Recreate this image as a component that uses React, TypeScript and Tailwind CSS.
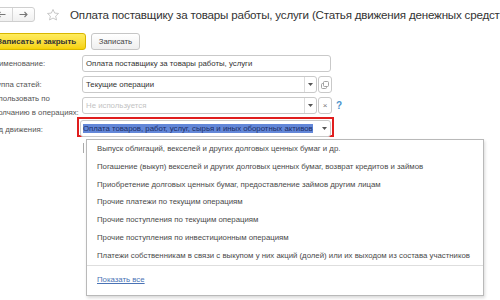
import React from "react";

const items = [
  "Выпуск облигаций, векселей и других долговых ценных бумаг и др.",
  "Погашение (выкуп) векселей и других долговых ценных бумаг, возврат кредитов и займов",
  "Приобретение долговых ценных бумаг, предоставление займов другим лицам",
  "Прочие платежи по текущим операциям",
  "Прочие поступления по текущим операциям",
  "Прочие поступления по инвестиционным операциям",
  "Платежи собственникам в связи с выкупом у них акций (долей) или их выходом из состава участников",
];

function Arrow() {
  return (
    <svg width="5" height="3" viewBox="0 0 5 3" className="text-[#555]">
      <path d="M0 0h5L2.5 3z" fill="currentColor" />
    </svg>
  );
}

function Field({ children, className = "" }: { children?: React.ReactNode; className?: string }) {
  return (
    <div className={"h-[17px] flex items-center rounded-[3px] border border-[#c9c9c9] bg-white " + className}>
      {children}
    </div>
  );
}

function Label({ children }: { children: React.ReactNode }) {
  return <div className="w-[93px] shrink-0 text-[7.8px] leading-[14px] text-[#555]">{children}</div>;
}

export default function App() {
  return (
    <div className="w-[500px] h-[300px] overflow-hidden bg-white font-['Liberation_Sans',Arial,sans-serif]">
      <div className="-ml-[11px] w-[520px]">
        {/* header */}
        <div className="flex items-center h-[29px]">
          <div className="ml-[1px] flex h-[15px] rounded-[3px] border border-[#cfcfcf] bg-gradient-to-b from-white to-[#f0f0f0]">
            <div className="w-[22px] flex items-center justify-center border-r border-[#d6d6d6]">
              <svg width="9" height="7" viewBox="0 0 9 7">
                <path d="M8.5 3.5H1M3.5 1L1 3.5 3.5 6" stroke="#777" strokeWidth="1.1" fill="none" />
              </svg>
            </div>
            <div className="w-[21px] flex items-center justify-center">
              <svg width="9" height="7" viewBox="0 0 9 7">
                <path d="M0.5 3.5H8M5.5 1L8 3.5 5.5 6" stroke="#777" strokeWidth="1.1" fill="none" />
              </svg>
            </div>
          </div>
          <svg width="14" height="14" viewBox="0 0 24 24" className="ml-[11px] shrink-0">
            <path
              d="M12 2.5l2.9 6.2 6.6.7-4.9 4.5 1.4 6.6L12 17.2l-5.9 3.3 1.4-6.6-4.9-4.5 6.6-.7z"
              fill="none"
              stroke="#bcbcbc"
              strokeWidth="1.4"
              strokeLinejoin="round"
            />
          </svg>
          <div className="ml-[10px] whitespace-nowrap text-[11.6px] tracking-[-0.2px] text-[#333]">
            Оплата поставщику за товары работы, услуги (Статья движения денежных средств)
          </div>
        </div>

        {/* buttons */}
        <div className="flex items-center mt-[4px] h-[17px]">
          <div className="w-[97px] h-[17px] flex items-center pl-[7px] rounded-[3px] border border-[#d8b600] bg-gradient-to-b from-[#ffec5c] to-[#f6d200] text-[8px] font-bold text-[#333] whitespace-nowrap">
            Записать и закрыть
          </div>
          <div className="ml-[5px] w-[49px] h-[17px] flex items-center justify-center rounded-[3px] border border-[#c6c6c6] bg-gradient-to-b from-white to-[#efefef] text-[7.8px] text-[#444]">
            Записать
          </div>
        </div>

        {/* form */}
        <div className="mt-[5px] flex flex-col">
          <div className="flex items-center h-[17px]">
            <Label>Наименование:</Label>
            <Field className="w-[249px] pl-[3px] text-[7.8px] text-[#333] whitespace-nowrap">
              Оплата поставщику за товары работы, услуги
            </Field>
          </div>

          <div className="flex items-center h-[17px] mt-[4px]">
            <Label>Группа статей:</Label>
            <Field className="w-[235px] text-[7.8px] text-[#333]">
              <div className="flex-1 pl-[3px]">Текущие операции</div>
              <div className="w-[12px] h-full flex items-center justify-center border-l border-[#dcdcdc]">
                <Arrow />
              </div>
            </Field>
            <div className="ml-[1px] w-[14px] h-[17px] flex items-center justify-center rounded-[3px] border border-[#c9c9c9] bg-white">
              <svg width="8" height="8" viewBox="0 0 8 8">
                <rect x="0.5" y="2.5" width="5" height="5" rx="1" fill="none" stroke="#999" strokeWidth="0.9" />
                <rect x="2.5" y="0.5" width="5" height="5" rx="1" fill="white" stroke="#999" strokeWidth="0.9" />
              </svg>
            </div>
          </div>

          <div className="flex items-center h-[17px] mt-[4px]">
            <Label>
              Использовать по
              <br />
              умолчанию в операциях:
            </Label>
            <Field className="w-[235px] text-[7.8px] text-[#c3c3c3]">
              <div className="flex-1 pl-[3px]">Не используется</div>
              <div className="w-[12px] h-full flex items-center justify-center border-l border-[#dcdcdc]">
                <Arrow />
              </div>
            </Field>
            <div className="ml-[1px] w-[14px] h-[17px] flex items-center justify-center rounded-[3px] border border-[#c9c9c9] bg-white text-[8px] text-[#777]">
              ×
            </div>
            <div className="ml-[4px] text-[10px] font-bold text-[#4b92cc]">?</div>
          </div>

          <div className="flex items-center mt-[3px] h-[20px]">
            <div className="w-[88px] shrink-0 text-[7.8px] text-[#555] pt-[5px]">Вид движения:</div>
            <div className="relative w-[257px] h-[20px] border-2 border-[#e01e1e] p-[1px]">
              <Field className="h-[14px] w-full text-[7.8px] whitespace-nowrap">
                <div className="flex-1 pl-[2px] overflow-hidden">
                  <span className="bg-[#6387d8] text-[#1b2d66]">
                    Оплата товаров, работ, услуг, сырья и иных оборотных активов
                  </span>
                </div>
                <div className="w-[12px] h-full flex items-center justify-center">
                  <Arrow />
                </div>
              </Field>

              {/* dropdown */}
              <div className="absolute left-[7px] top-[20px] w-[398px] bg-white border border-[#b9b9b9] shadow-[1px_2px_3px_rgba(0,0,0,0.15)] z-10">
                {items.map((t) => (
                  <div key={t} className="h-[17.8px] flex items-center pl-[10px] text-[7.8px] text-[#4a4a4a] whitespace-nowrap">
                    {t}
                  </div>
                ))}
                <div className="border-t border-[#dedede] h-[30px] flex items-center pl-[10px]">
                  <span className="text-[7.8px] text-[#4a73b5] underline">Показать все</span>
                </div>
              </div>
              <div className="absolute left-[4px] top-[24px] w-px h-[10px] bg-[#aaa]" />
            </div>
          </div>
        </div>
      </div>
    </div>
  );
}
